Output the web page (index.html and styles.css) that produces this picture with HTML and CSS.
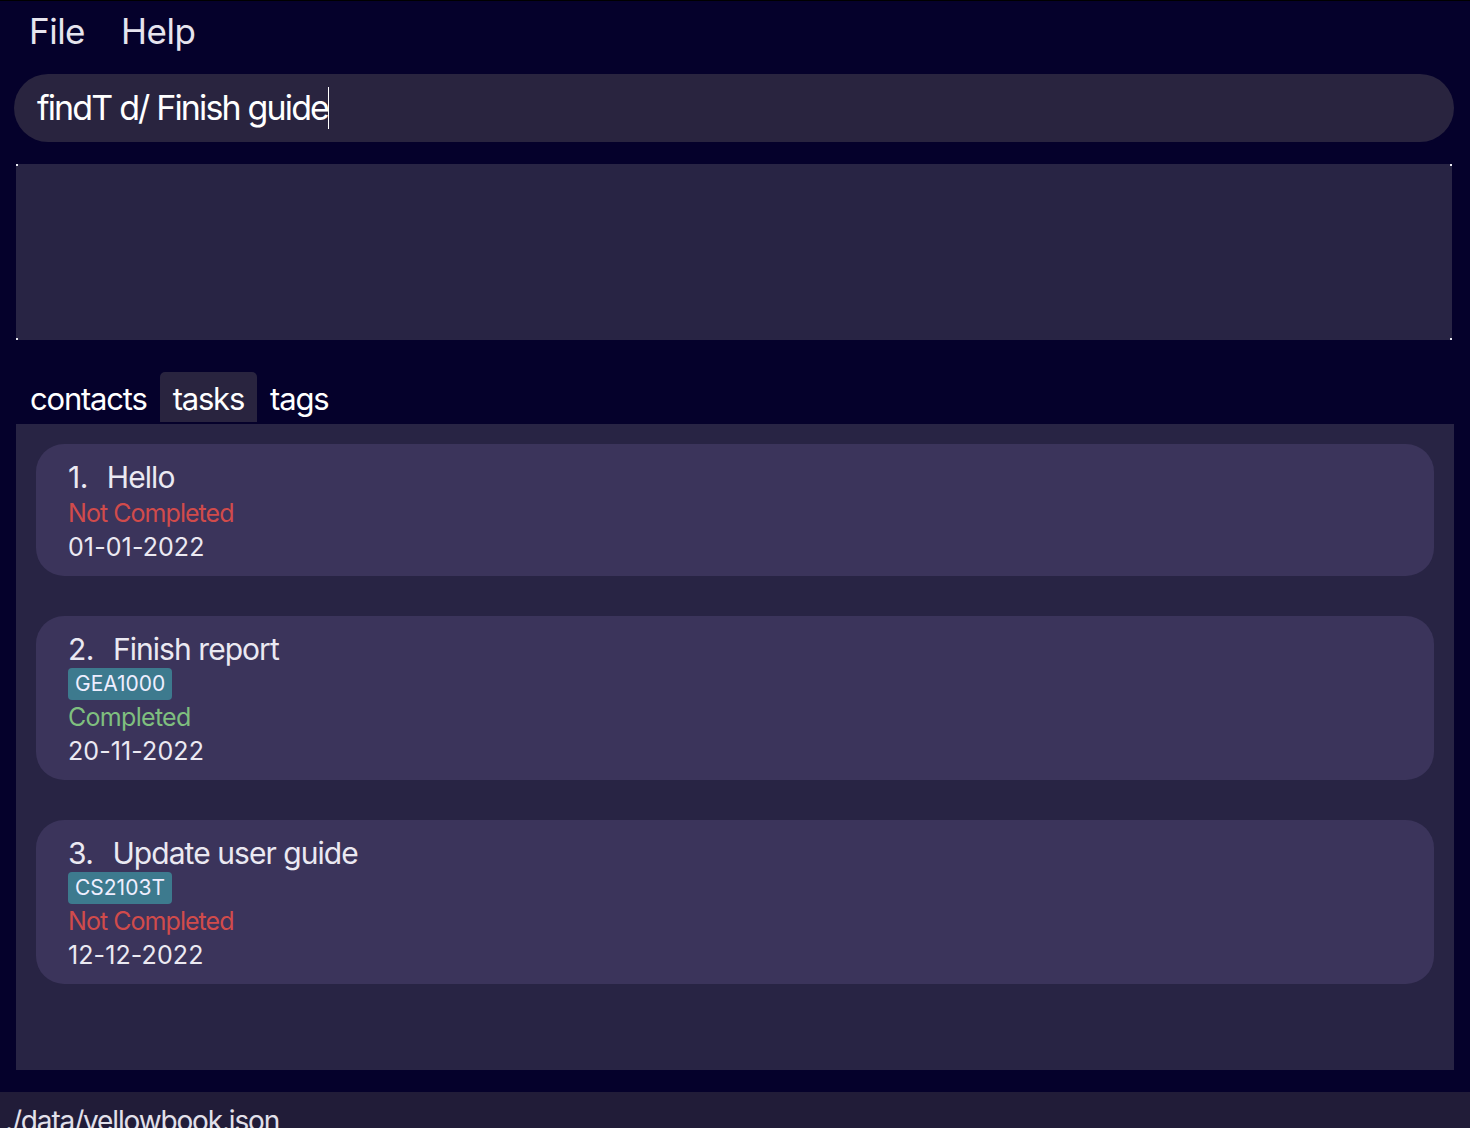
FILE: index.html
```html
<!DOCTYPE html>
<html>
<head>
<meta charset="utf-8">
<link rel="stylesheet" href="styles.css">
</head>
<body>
<div class="app">
  <nav class="menubar">
    <span class="menu-item">File</span>
    <span class="menu-item">Help</span>
  </nav>
  <div class="command-box"><span class="command-text">findT d/ Finish guide</span></div>
  <div class="result-display"></div>
  <div class="tabs">
    <span class="tab">contacts</span>
    <span class="tab active">tasks</span>
    <span class="tab">tags</span>
  </div>
  <div class="list-panel">
    <div class="card">
      <div class="title"><span class="num">1.</span>Hello</div>
      <div class="status todo">Not Completed</div>
      <div class="date">01-01-2022</div>
    </div>
    <div class="card">
      <div class="title"><span class="num">2.</span>Finish report</div>
      <div class="tags"><span class="tag">GEA1000</span></div>
      <div class="status done">Completed</div>
      <div class="date">20-11-2022</div>
    </div>
    <div class="card">
      <div class="title"><span class="num">3.</span>Update user guide</div>
      <div class="tags"><span class="tag">CS2103T</span></div>
      <div class="status todo">Not Completed</div>
      <div class="date">12-12-2022</div>
    </div>
  </div>
  <div class="status-bar">./data/yellowbook.json</div>
</div>
</body>
</html>
```
FILE: styles.css
```css
* { box-sizing: border-box; }
html, body {
  margin: 0;
  padding: 0;
  background: #05012b;
  height: 1128px;
  overflow: hidden;
}
body {
  font-family: Inter, "Noto Sans", sans-serif;
  color: #ebe9f2;
}
.app {
  display: flex;
  flex-direction: column;
  height: 1128px;
  border-top: 1px solid #000;
}
.app > * { flex-shrink: 0; }
.menubar {
  display: flex;
  height: 63px;
  align-items: center;
  padding-left: 29px;
  padding-bottom: 3px;
  gap: 36px;
}
.menu-item {
  font-size: 35px;
  color: #e6e4ee;
  letter-spacing: -0.5px;
}
.command-box {
  margin: 10px 16px 0 14px;
  height: 68px;
  border-radius: 34px;
  background: #29243f;
  display: flex;
  align-items: center;
  padding-left: 23px;
}
.command-text {
  font-size: 34px;
  color: #ffffff;
  letter-spacing: -1.85px;
  border-right: 1.5px solid #fff;
  line-height: 42px;
}
.result-display {
  margin: 22px 18px 0 16px;
  height: 176px;
  background:
    linear-gradient(#e8e8f0, #e8e8f0) left top / 2px 2px no-repeat,
    linear-gradient(#e8e8f0, #e8e8f0) right top / 2px 2px no-repeat,
    linear-gradient(#e8e8f0, #e8e8f0) left bottom / 2px 2px no-repeat,
    linear-gradient(#e8e8f0, #e8e8f0) right bottom / 2px 2px no-repeat,
    #282444;
}
.tabs {
  display: flex;
  margin: 32px 0 0 16px;
  height: 50px;
}
.tab {
  padding: 0 13px;
  font-size: 31px;
  line-height: 54px;
  color: #ffffff;
  letter-spacing: -1.2px;
  border-radius: 5px 5px 0 0;
}
.tab:first-child { padding-left: 14px; }
.tab.active { background: #29243f; }
.list-panel {
  margin: 2px 16px 0 16px;
  height: 646px;
  background: #282444;
  padding: 20px;
  display: flex;
  flex-direction: column;
  gap: 40px;
}
.card {
  background: #3b345b;
  border-radius: 28px;
  padding: 14px 32px 12px;
}
.title {
  font-size: 30px;
  line-height: 38px;
  color: #ebe9f2;
  letter-spacing: -0.95px;
}
.num { margin-right: 19px; letter-spacing: -0.5px; }
.status, .date {
  font-size: 25px;
  line-height: 34px;
}
.todo { color: #d14b4b; letter-spacing: -0.95px; }
.done { color: #7fbf7f; letter-spacing: -0.7px; }
.date { color: #ebe9f2; letter-spacing: 0.1px; }
.tags {
  display: flex;
}
.tag {
  background: #3d7a8e;
  color: #eef;
  font-size: 21px;
  height: 32px;
  line-height: 32px;
  padding: 0 7px;
  border-radius: 4px;
}
.status-bar {
  margin-top: 22px;
  flex: 1 1 auto;
  min-height: 0;
  overflow: hidden;
  background: #211c38;
  padding: 12px 0 0 5px;
  font-size: 28px;
  line-height: 34px;
  color: #e2e0ea;
  letter-spacing: -1.15px;
}
```
